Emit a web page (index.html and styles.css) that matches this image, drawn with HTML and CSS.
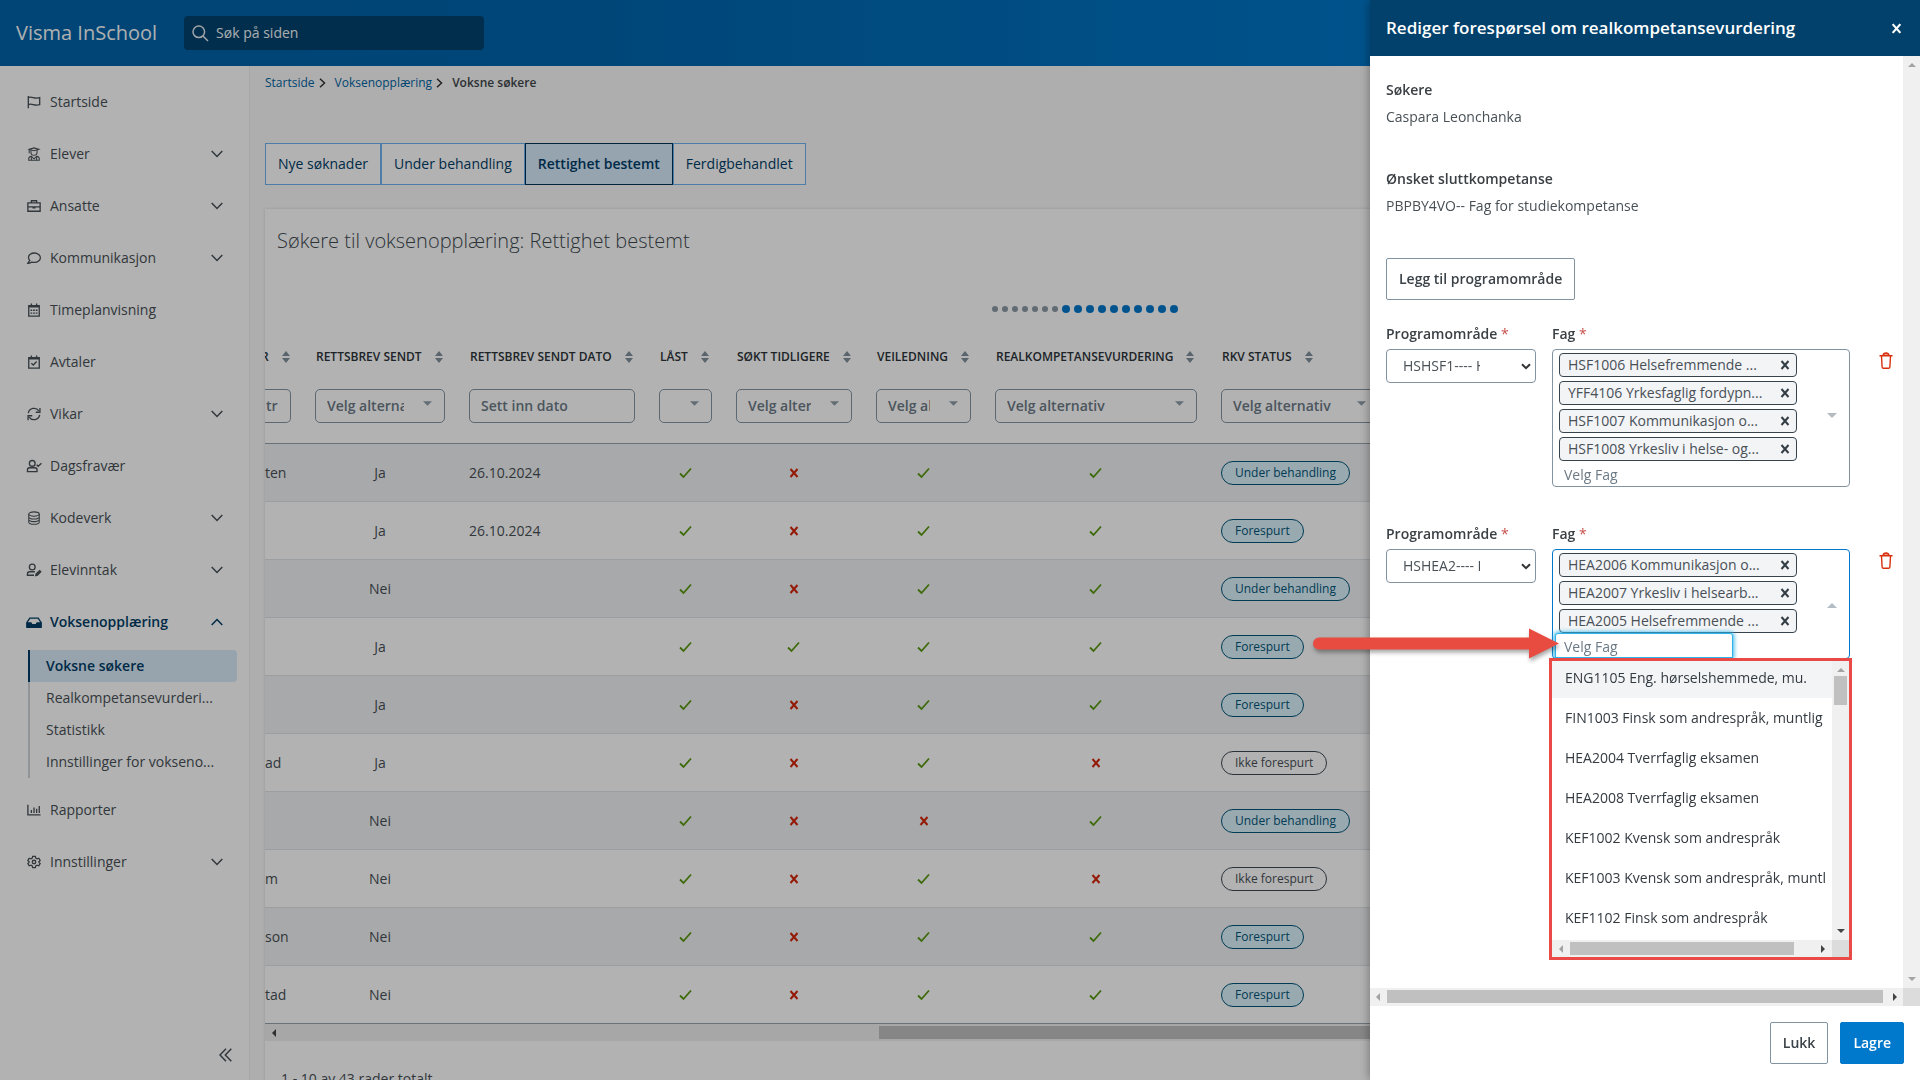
FILE: index.html
```html
<!DOCTYPE html>
<html lang="no">
<head>
<meta charset="utf-8">
<meta name="viewport" content="width=device-width, initial-scale=1">
<title>Visma InSchool – Voksne søkere</title>
<link rel="stylesheet" href="styles.css">
</head>
<body>
<svg class="sprite" aria-hidden="true">
  <symbol id="check" viewBox="0 0 14 12"><path d="M1 6.500 4.500 10 12 1.500" fill="none" stroke="currentColor" stroke-width="1.800"/></symbol>
  <symbol id="cross" viewBox="0 0 10 10"><path d="M1.500 1 8.500 9M8.500 1 1.500 9" fill="none" stroke="currentColor" stroke-width="2"/></symbol>
  <symbol id="sort" viewBox="0 0 8 12"><path d="M4 0 8 5H0zM4 12 0 7h8z" fill="currentColor"/></symbol>
  <symbol id="caret" viewBox="0 0 10 5"><path d="M0 0h10L5 5z" fill="currentColor"/></symbol>
  <symbol id="chevron" viewBox="0 0 12 8"><path d="M.7 1 6 6.5 11.3 1" fill="none" stroke="currentColor" stroke-width="1.5"/></symbol>
  <symbol id="trash" viewBox="0 0 14 17"><path d="M4 3.5C4.300 1.500 5 1 7 1s2.700.5 3 2.500z" fill="#ef9a86"/><path d="M.5 3.800h13M4 3.500C4.300 1.500 5 1 7 1s2.700.5 3 2.500M2.500 4l.6 11q.1 1.300 1.300 1.300h5.200q1.200 0 1.300-1.300l.6-11" fill="none" stroke="currentColor" stroke-width="1.400"/></symbol>
  <symbol id="arr" viewBox="0 0 8 4"><path d="M4 0 8 4H0z" fill="currentColor"/></symbol>
</svg>

<div class="app">
  <header class="topbar">
    <span class="brand">Visma InSchool</span>
    <label class="search">
      <svg width="17" height="17" viewBox="0 0 17 17" fill="none" stroke="currentColor" stroke-width="1.500"><circle cx="6.800" cy="6.800" r="5.800"/><path d="m11 11 5 5"/></svg>
      <input type="search" placeholder="Søk på siden" aria-label="Søk på siden">
    </label>
  </header>
  <div class="columns">
    <nav class="sidebar">
      <a class="item" href="#"><svg class="ico" viewBox="0 0 16 16"><path d="M1.500 1v14M1.500 3c4-2 7 2 13 0v8c-6 2-9-2-13 0"/></svg><span>Startside</span></a>
      <a class="item" href="#"><svg class="ico thin" viewBox="0 0 16 16"><path d="M2.500 2.500 8 1l5.500 1.500L8 4.200zM4.500 3.500V6a3.500 3.500 0 0 0 7 0V3.500M2.500 3v4M2 15.200v-2q0-2 3-2.500l3 2.800 3-2.800q3 .5 3 2.500v2zM5 12v3M11 12v3"/></svg><span>Elever</span><svg class="chev"><use href="#chevron"/></svg></a>
      <a class="item" href="#"><svg class="ico" viewBox="0 0 16 16"><path d="M1 4.500h14v9.500H1zM5 4.500V2h6v2.500M1 9h5.500M9.500 9H15M7 9h2v1H7z"/></svg><span>Ansatte</span><svg class="chev"><use href="#chevron"/></svg></a>
      <a class="item" href="#"><svg class="ico" viewBox="0 0 16 16"><path d="M8.500 2.300c-3.800 0-6.800 2.300-6.800 5.200 0 1.500.6 2.500 1.500 3.300L1 14c2 .2 3.500-.5 4.500-1.300 1 .3 2 .4 3 .4 3.800 0 6.800-2.500 6.800-5.400s-3-5.400-6.800-5.400z"/></svg><span>Kommunikasjon</span><svg class="chev"><use href="#chevron"/></svg></a>
      <a class="item" href="#"><svg class="ico" viewBox="0 0 16 16"><path d="M2 3h12v12H2zM2 4.500h12M5 .5v3M11 .5v3"/><path d="M4 8.300h8M4 11.500h8" stroke-dasharray="2 1"/></svg><span>Timeplanvisning</span></a>
      <a class="item" href="#"><svg class="ico" viewBox="0 0 16 16"><path d="M2 3h12v12H2zM2 4.500h12M5 .5v3M11 .5v3M5 9.500l2.200 2L11 7.500"/></svg><span>Avtaler</span></a>
      <a class="item" href="#"><svg class="ico" viewBox="0 0 16 16"><path d="M1.500 7a6.600 6.600 0 0 1 12-2.500M14.800 1v5H10M14.500 9a6.600 6.600 0 0 1-12 2.500M1.200 15v-5H6"/></svg><span>Vikar</span><svg class="chev"><use href="#chevron"/></svg></a>
      <a class="item" href="#"><svg class="ico" viewBox="0 0 16 16"><circle cx="6" cy="5" r="3.300"/><path d="M.5 14.500v-2Q.5 10 3 10h6q2.500 0 2.500 2.500v2zM11 6.500l1.800 1.800 3.700-3.500"/></svg><span>Dagsfravær</span></a>
      <a class="item" href="#"><svg class="ico thin" viewBox="0 0 16 16"><ellipse cx="8" cy="3.500" rx="6" ry="2.500"/><path d="M2 3.500v9C2 16 14 16 14 12.500v-9M2 6.500C2 10 14 10 14 6.500M2 9.500c0 3.500 12 3.500 12 0"/></svg><span>Kodeverk</span><svg class="chev"><use href="#chevron"/></svg></a>
      <a class="item" href="#"><svg class="ico" viewBox="0 0 16 16"><circle cx="6" cy="4.500" r="3.300"/><path d="M8 14H.5v-1.500Q.5 10 3 10h6"/><path d="M10 14.500l.5-2 4-3.800 1.200 1.300-3.700 4z" fill="currentColor"/></svg><span>Elevinntak</span><svg class="chev"><use href="#chevron"/></svg></a>
      <a class="item item-open" href="#"><svg class="ico" viewBox="0 0 16 16"><path d="M0 8.500 3.200 3.500h9.600L16 8.500v4.800q0 .7-.7.7H.7q-.7 0-.7-.7z"/><path d="M0 9h4.500l1 2h5l1-2H16v5H0z" fill="currentColor"/></svg><span>Voksenopplæring</span><svg class="chev up"><use href="#chevron"/></svg></a>
      <div class="submenu">
        <a class="current" href="#">Voksne søkere</a>
        <a href="#">Realkompetansevurderi...</a>
        <a href="#">Statistikk</a>
        <a href="#">Innstillinger for vokseno...</a>
      </div>
      <a class="item" href="#"><svg class="ico" viewBox="0 0 16 16"><path d="M1 2v11.500H15.500M5 11.500V8M8 11.500V5M11 11.500V6.500M14 11.500V3.500"/></svg><span>Rapporter</span></a>
      <a class="item" href="#"><svg class="ico" viewBox="0 0 16 16"><circle cx="8" cy="8" r="2"/><path d="M6.500 1.500h3l.5 2 1.500.8 2-.6 1.500 2.600L13.500 8l1.500 1.700-1.500 2.600-2-.6-1.500.8-.5 2h-3l-.5-2-1.500-.8-2 .6L1 9.700 2.500 8 1 6.300l1.500-2.600 2 .6L6 3.500z"/></svg><span>Innstillinger</span><svg class="chev"><use href="#chevron"/></svg></a>
      <button class="collapse" type="button" aria-label="Skjul meny"><svg width="13" height="14" viewBox="0 0 13 14" fill="none" stroke="currentColor" stroke-width="1.500"><path d="M7 .8 1 7l6 6.200M12.300.8l-6 6.200 6 6.200"/></svg></button>
    </nav>
    <main class="main">
      <div class="crumbs">
        <a href="#">Startside</a><svg width="7" height="10" viewBox="0 0 7 10"><path d="M1 .8 5.500 5 1 9.200"/></svg>
        <a href="#">Voksenopplæring</a><svg width="7" height="10" viewBox="0 0 7 10"><path d="M1 .8 5.500 5 1 9.200"/></svg>
        <span>Voksne søkere</span>
      </div>
      <div class="tabs">
        <button type="button">Nye søknader</button><button type="button">Under behandling</button><button type="button" class="active">Rettighet bestemt</button><button type="button">Ferdigbehandlet</button>
      </div>
      <section class="card">
        <h1>Søkere til voksenopplæring: Rettighet bestemt</h1>
        <div class="dots"><i></i><i></i><i></i><i></i><i></i><i></i><i></i><b></b><b></b><b></b><b></b><b></b><b></b><b></b><b></b><b></b><b></b></div>
        <table>
          <colgroup><col class="c0"><col class="c1"><col class="c2"><col class="c3"><col class="c4"><col class="c5"><col class="c6"><col class="c7"><col></colgroup>
          <thead>
            <tr class="labels">
              <th class="cut">R<svg><use href="#sort"/></svg></th>
              <th>RETTSBREV SENDT<svg><use href="#sort"/></svg></th>
              <th>RETTSBREV SENDT DATO<svg><use href="#sort"/></svg></th>
              <th>LÅST<svg><use href="#sort"/></svg></th>
              <th>SØKT TIDLIGERE<svg><use href="#sort"/></svg></th>
              <th>VEILEDNING<svg><use href="#sort"/></svg></th>
              <th>REALKOMPETANSEVURDERING<svg><use href="#sort"/></svg></th>
              <th>RKV STATUS<svg><use href="#sort"/></svg></th>
              <th></th>
            </tr>
            <tr class="filters">
              <td class="cut"><div class="filter"><input placeholder="tr" aria-label="Filter"></div></td>
              <td><div class="filter"><input placeholder="Velg alternativ" aria-label="Rettsbrev sendt"><svg><use href="#caret"/></svg></div></td>
              <td><div class="filter date"><input placeholder="Sett inn dato" aria-label="Rettsbrev sendt dato"></div></td>
              <td><div class="filter"><input aria-label="Låst"><svg><use href="#caret"/></svg></div></td>
              <td><div class="filter"><input placeholder="Velg alternativ" aria-label="Søkt tidligere"><svg><use href="#caret"/></svg></div></td>
              <td><div class="filter"><input placeholder="Velg alternativ" aria-label="Veiledning"><svg><use href="#caret"/></svg></div></td>
              <td><div class="filter"><input placeholder="Velg alternativ" aria-label="Realkompetansevurdering"><svg><use href="#caret"/></svg></div></td>
              <td><div class="filter"><input placeholder="Velg alternativ" aria-label="RKV status"><svg><use href="#caret"/></svg></div></td>
              <td></td>
            </tr>
          </thead>
          <tbody>
            <tr><td>ten</td><td>Ja</td><td>26.10.2024</td><td><svg class="ok"><use href="#check"/></svg></td><td><svg class="no"><use href="#cross"/></svg></td><td><svg class="ok"><use href="#check"/></svg></td><td><svg class="ok"><use href="#check"/></svg></td><td><span class="pill blue">Under behandling</span></td><td></td></tr>
            <tr><td></td><td>Ja</td><td>26.10.2024</td><td><svg class="ok"><use href="#check"/></svg></td><td><svg class="no"><use href="#cross"/></svg></td><td><svg class="ok"><use href="#check"/></svg></td><td><svg class="ok"><use href="#check"/></svg></td><td><span class="pill blue">Forespurt</span></td><td></td></tr>
            <tr><td></td><td>Nei</td><td></td><td><svg class="ok"><use href="#check"/></svg></td><td><svg class="no"><use href="#cross"/></svg></td><td><svg class="ok"><use href="#check"/></svg></td><td><svg class="ok"><use href="#check"/></svg></td><td><span class="pill blue">Under behandling</span></td><td></td></tr>
            <tr><td></td><td>Ja</td><td></td><td><svg class="ok"><use href="#check"/></svg></td><td><svg class="ok"><use href="#check"/></svg></td><td><svg class="ok"><use href="#check"/></svg></td><td><svg class="ok"><use href="#check"/></svg></td><td><span class="pill blue">Forespurt</span></td><td></td></tr>
            <tr><td></td><td>Ja</td><td></td><td><svg class="ok"><use href="#check"/></svg></td><td><svg class="no"><use href="#cross"/></svg></td><td><svg class="ok"><use href="#check"/></svg></td><td><svg class="ok"><use href="#check"/></svg></td><td><span class="pill blue">Forespurt</span></td><td></td></tr>
            <tr><td>ad</td><td>Ja</td><td></td><td><svg class="ok"><use href="#check"/></svg></td><td><svg class="no"><use href="#cross"/></svg></td><td><svg class="ok"><use href="#check"/></svg></td><td><svg class="no"><use href="#cross"/></svg></td><td><span class="pill">Ikke forespurt</span></td><td></td></tr>
            <tr><td></td><td>Nei</td><td></td><td><svg class="ok"><use href="#check"/></svg></td><td><svg class="no"><use href="#cross"/></svg></td><td><svg class="no"><use href="#cross"/></svg></td><td><svg class="ok"><use href="#check"/></svg></td><td><span class="pill blue">Under behandling</span></td><td></td></tr>
            <tr><td>m</td><td>Nei</td><td></td><td><svg class="ok"><use href="#check"/></svg></td><td><svg class="no"><use href="#cross"/></svg></td><td><svg class="ok"><use href="#check"/></svg></td><td><svg class="no"><use href="#cross"/></svg></td><td><span class="pill">Ikke forespurt</span></td><td></td></tr>
            <tr><td>son</td><td>Nei</td><td></td><td><svg class="ok"><use href="#check"/></svg></td><td><svg class="no"><use href="#cross"/></svg></td><td><svg class="ok"><use href="#check"/></svg></td><td><svg class="ok"><use href="#check"/></svg></td><td><span class="pill blue">Forespurt</span></td><td></td></tr>
            <tr><td>tad</td><td>Nei</td><td></td><td><svg class="ok"><use href="#check"/></svg></td><td><svg class="no"><use href="#cross"/></svg></td><td><svg class="ok"><use href="#check"/></svg></td><td><svg class="ok"><use href="#check"/></svg></td><td><span class="pill blue">Forespurt</span></td><td></td></tr>
          </tbody>
        </table>
        <div class="hbar table-bar"><svg class="arr left on"><use href="#arr"/></svg><span class="thumb"></span></div>
        <p class="count">1 - 10 av 43 rader totalt</p>
      </section>
    </main>
  </div>
</div>

<div class="backdrop"></div>

<aside class="drawer" role="dialog" aria-labelledby="drawer-title">
  <header class="drawer-head">
    <h2 id="drawer-title">Rediger forespørsel om realkompetansevurdering</h2>
    <button type="button" aria-label="Lukk dialog"><svg width="11" height="11" viewBox="0 0 10 10"><use href="#cross" width="10" height="10"/></svg></button>
  </header>
  <div class="drawer-body">
    <div class="content">
      <dl>
        <dt>Søkere</dt><dd>Caspara Leonchanka</dd>
        <dt>Ønsket sluttkompetanse</dt><dd>PBPBY4VO-- Fag for studiekompetanse</dd>
      </dl>
      <button type="button" class="btn">Legg til programområde</button>
      <div class="group">
        <div class="field">
          <label for="area1">Programområde <em>*</em></label>
          <div class="select"><select id="area1"><option>HSHSF1---- Helseservicefag</option></select><svg width="10" height="7" viewBox="0 0 10 7"><path d="M1 1.200 5 5.200 9 1.200"/></svg></div>
        </div>
        <div class="field">
          <label for="fag1">Fag <em>*</em></label>
          <div class="multi">
            <div class="picked">
              <span class="tag">HSF1006 Helsefremmende ...<button type="button" aria-label="Fjern"><svg><use href="#cross"/></svg></button></span>
              <span class="tag">YFF4106 Yrkesfaglig fordypn...<button type="button" aria-label="Fjern"><svg><use href="#cross"/></svg></button></span>
              <span class="tag">HSF1007 Kommunikasjon o...<button type="button" aria-label="Fjern"><svg><use href="#cross"/></svg></button></span>
              <span class="tag">HSF1008 Yrkesliv i helse- og...<button type="button" aria-label="Fjern"><svg><use href="#cross"/></svg></button></span>
              <input id="fag1" placeholder="Velg Fag">
            </div>
            <svg class="toggle"><use href="#caret"/></svg>
          </div>
        </div>
        <button type="button" class="remove" aria-label="Slett"><svg width="14" height="17"><use href="#trash"/></svg></button>
      </div>
      <div class="group">
        <div class="field">
          <label for="area2">Programområde <em>*</em></label>
          <div class="select"><select id="area2"><option>HSHEA2---- Helsearbeiderfag</option></select><svg width="10" height="7" viewBox="0 0 10 7"><path d="M1 1.200 5 5.200 9 1.200"/></svg></div>
        </div>
        <div class="field">
          <label for="fag2">Fag <em>*</em></label>
          <div class="multi open">
            <div class="picked">
              <span class="tag">HEA2006 Kommunikasjon o...<button type="button" aria-label="Fjern"><svg><use href="#cross"/></svg></button></span>
              <span class="tag">HEA2007 Yrkesliv i helsearb...<button type="button" aria-label="Fjern"><svg><use href="#cross"/></svg></button></span>
              <span class="tag">HEA2005 Helsefremmende ...<button type="button" aria-label="Fjern"><svg><use href="#cross"/></svg></button></span>
              <input id="fag2" placeholder="Velg Fag">
            </div>
            <svg class="toggle up"><use href="#caret"/></svg>
            <div class="dropdown">
              <div class="list">
                <ul role="listbox" aria-label="Fag">
                  <li role="option" class="hover">ENG1105 Eng. hørselshemmede, mu.</li>
                  <li role="option">FIN1003 Finsk som andrespråk, muntlig</li>
                  <li role="option">HEA2004 Tverrfaglig eksamen</li>
                  <li role="option">HEA2008 Tverrfaglig eksamen</li>
                  <li role="option">KEF1002 Kvensk som andrespråk</li>
                  <li role="option">KEF1003 Kvensk som andrespråk, muntl</li>
                  <li role="option">KEF1102 Finsk som andrespråk</li>
                </ul>
              </div>
              <div class="vbar"><svg class="arr"><use href="#arr"/></svg><span class="thumb"></span><svg class="arr down on"><use href="#arr"/></svg></div>
              <div class="hbar"><svg class="arr left"><use href="#arr"/></svg><span class="thumb"></span><svg class="arr right on"><use href="#arr"/></svg></div>
              <div class="corner"></div>
            </div>
            <svg class="pointer" width="248" height="34" viewBox="0 0 248 34"><path d="M6 10.500H216V1.500L246 16.500 216 31.500V22.500H6A6 6 0 0 1 6 10.500Z" fill="#e84c41"/></svg>
          </div>
        </div>
        <button type="button" class="remove" aria-label="Slett"><svg width="14" height="17"><use href="#trash"/></svg></button>
      </div>
    </div>
    <div class="vbar"><svg class="arr"><use href="#arr"/></svg><svg class="arr down"><use href="#arr"/></svg></div>
    <div class="hbar"><svg class="arr left"><use href="#arr"/></svg><span class="thumb"></span><svg class="arr right on"><use href="#arr"/></svg></div>
    <div class="corner"></div>
  </div>
  <footer class="drawer-foot">
    <button type="button" class="btn">Lukk</button>
    <button type="button" class="btn primary">Lagre</button>
  </footer>
</aside>
</body>
</html>
```

FILE: styles.css
```css
*, *::before, *::after { box-sizing: border-box; }
body, h1, h2, p, ul, dl, dd { margin: 0; padding: 0; }
body {
  font: 14px/20px "Open Sans", sans-serif;
  color: #485056;
  background: #fafafa;
  overflow: hidden;
}
button, input, select { font: inherit; color: inherit; }
button { background: none; border: 0; padding: 0; cursor: pointer; }
a { color: inherit; text-decoration: none; }
.sprite { position: absolute; width: 0; height: 0; }

.app { display: flex; flex-direction: column; height: 100vh; }

/* Top bar */
.topbar {
  flex: none;
  display: flex;
  align-items: center;
  gap: 27px;
  height: 66px;
  padding: 0 16px;
  background: linear-gradient(to right, #0063a8 0, #0065ac 30%, #007ace 80%);
}
.brand { font-size: 20px; line-height: 24px; color: #fafcfd; }
.search {
  display: flex;
  align-items: center;
  gap: 7px;
  width: 300px;
  height: 34px;
  padding: 0 8px;
  border-radius: 4px;
  background: #00426e;
  color: #e6edf2;
}
.search input { flex: 1; min-width: 0; border: 0; background: none; outline: 0; padding: 0; }
.search input::placeholder { color: #f4f8fa; opacity: 1; }

/* Sidebar */
.columns { flex: 1; min-height: 0; display: flex; }
.sidebar {
  flex: none;
  display: flex;
  flex-direction: column;
  width: 250px;
  padding: 10px 12px 13px 27px;
  background: #fff;
  border-right: 1px solid #f0f0f0;
}
.item {
  display: flex;
  align-items: center;
  gap: 9px;
  height: 52px;
  padding-right: 14px;
}
.item span { flex: 1; }
.ico { width: 14px; height: 14px; fill: none; stroke: currentColor; stroke-width: 1.5; overflow: visible; }
.thin { stroke-width: 1.2; }
.chev { width: 12px; height: 8px; }
.up { transform: rotate(180deg); }
.item-open { color: #003d66; font-weight: 600; }
.submenu { margin: 2px 0 6px 1px; border-left: 2px solid #ced4d8; }
.submenu a { display: block; height: 32px; padding-left: 16px; line-height: 32px; white-space: nowrap; }
.submenu .current {
  margin-left: -2px;
  border-left: 2px solid #003d66;
  border-radius: 0 4px 4px 0;
  background: #d8eaf8;
  color: #003d66;
  font-weight: 600;
}
.collapse { align-self: flex-end; width: 24px; height: 24px; margin-top: auto; display: grid; place-items: center; }

/* Page content */
.main { flex: 1; min-width: 0; display: flex; flex-direction: column; padding: 9px 16px 0 15px; }
.crumbs { display: flex; align-items: center; font-size: 12px; line-height: 16px; }
.crumbs a { color: #0063a3; }
.crumbs svg { margin: 0 9px 0 4px; fill: none; stroke: #333; stroke-width: 1.5; }
.crumbs span { color: #40464b; font-weight: 600; }
.tabs { display: flex; margin-top: 52px; }
.tabs button { height: 42px; padding: 0 12px; border: 1px solid #70b4f4; background: #fff; color: #003d66; }
.tabs .active { border-color: #003357; background: #d6ebfb; font-weight: 600; }
.card { flex: none; margin-top: 24px; padding-top: 20px; background: #fff; box-shadow: 0 0 3px rgba(0, 0, 0, .15); }
.card h1 { padding-left: 12px; font-size: 20px; line-height: 24px; font-weight: 300; color: #404a50; }
.dots { display: flex; align-items: center; justify-content: center; gap: 4px; padding: 52px 0 28px; }
.dots i { width: 6px; height: 6px; border-radius: 50%; background: #8c9aa6; }
.dots b { width: 8px; height: 8px; border-radius: 50%; background: #0079cc; }

table { width: 100%; table-layout: fixed; border-collapse: separate; border-spacing: 0; }
.c0 { width: 38px; } .c1 { width: 154px; } .c2 { width: 190px; } .c3 { width: 77px; }
.c4 { width: 140px; } .c5 { width: 119px; } .c6 { width: 226px; } .c7 { width: 182px; }
.labels th {
  height: 32px;
  padding: 0 0 0 13px;
  font-size: 12px;
  line-height: 16px;
  font-weight: 600;
  color: #2c3338;
  text-align: left;
  white-space: nowrap;
  overflow: hidden;
}
.labels svg { width: 8px; height: 12px; margin-left: 13px; color: #82909c; vertical-align: -2px; }
.labels .cut { padding: 0; text-indent: -4px; }
.filters td { padding: 16px 12px 20px; border-bottom: 1px solid #99a4ad; }
.filter {
  display: flex;
  height: 34px;
  padding-left: 11px;
  border: 1px solid #8496a4;
  border-radius: 5px;
  background: #fff;
}
.filter input { flex: 1; width: 0; min-width: 0; padding: 0; border: 0; background: none; outline: 0; font-weight: 600; }
.filter input::placeholder, .multi input::placeholder { color: #6c7a86; opacity: 1; }
.filter svg { flex: none; width: 9px; height: 5px; margin: 11px 12px 0 19px; color: #8f9ca7; }
.filters .cut { padding-left: 0; }
.filters .cut .filter { border-left: 0; border-radius: 0 5px 5px 0; padding: 0 12px 0 1px; }
tbody td { height: 58px; padding: 0; border-bottom: 1px solid #dde2e6; text-align: center; line-height: 20px; }
tbody tr:nth-child(odd) td { background: #f1f2f4; }
tbody tr:last-child td { border-bottom-color: #99a4ad; }
tbody td:nth-child(1) { text-align: left; white-space: nowrap; }
tbody td:nth-child(3), tbody td:nth-child(8) { text-align: left; padding-left: 12px; }
.ok { width: 14px; height: 12px; color: #58990f; vertical-align: -1px; }
.no { width: 10px; height: 10px; color: #d4260a; vertical-align: 0; }
.pill {
  display: inline-block;
  height: 24px;
  padding: 0 13px;
  border: 1px solid #3d4a54;
  border-radius: 12px;
  font-size: 12px;
  line-height: 22px;
  vertical-align: middle;
}
.blue { border-color: #00557a; background: #dcf3fc; color: #00557a; }
.count { padding: 28px 0 0 16px; }

/* Drawn scroll bars */
.vbar { display: flex; flex-direction: column; align-items: center; width: 17px; padding: 7px 0; background: #f0f0f0; }
.hbar { display: flex; align-items: center; height: 17px; padding: 0 5px; background: #f0f0f0; }
.corner { background: #dcdcdc; }
.thumb { background: #c0c0c0; }
.arr { flex: none; width: 8px; height: 4px; color: #a3a3a3; }
.arr.on { color: #444; }
.arr.left { transform: rotate(-90deg); }
.arr.right { transform: rotate(90deg); margin-left: auto; }
.arr.down { transform: rotate(180deg); margin-top: auto; }
.table-bar .thumb { flex: 1; height: 13px; margin-left: 601px; }

/* Drawer */
.backdrop { position: fixed; inset: 0; background: rgba(0, 0, 0, .3); }
.drawer {
  position: fixed;
  inset: 0 0 0 auto;
  display: flex;
  flex-direction: column;
  width: 550px;
  background: #fff;
  box-shadow: 0 0 10px rgba(0, 0, 0, .4);
}
.drawer-head {
  flex: none;
  display: flex;
  align-items: center;
  justify-content: space-between;
  height: 56px;
  padding: 0 16px;
  background: #01416b;
  color: #fff;
}
.drawer-head h2 { font-size: 17px; line-height: 24px; font-weight: 600; }
.drawer-head button { width: 16px; height: 24px; display: grid; place-items: center; }
.drawer-body { flex: 1; min-height: 0; display: grid; grid-template: minmax(0, 1fr) 18px / minmax(0, 1fr) 17px; }
.drawer-body > .hbar { height: 18px; padding: 0 4px 1px; }
.drawer-body > .hbar .thumb { flex: 1; height: 13px; margin: 0 8px 0 5px; }
.content { padding: 24px 16px; }
dt, .field label { color: #3b4045; font-weight: 600; }
dd { margin: 7px 0 42px; }
.btn {
  height: 42px;
  padding: 0 12px;
  border: 1px solid #8293a1;
  border-radius: 2px;
  background: #fff;
  color: #3b4248;
  font-weight: 600;
}
.primary { border-color: #0079cc; background: #0079cc; color: #fff; }
.group { display: grid; grid-template-columns: 150px 298px 40px; column-gap: 16px; align-items: start; margin-top: 24px; }
.group + .group { margin-top: 37px; }
.field label { display: block; margin-bottom: 5px; }
.field em { color: #c9514c; font-style: normal; font-weight: 400; }
.select { display: grid; grid-template-columns: 1fr 20px; align-items: center; height: 34px; border: 1px solid #8293a1; border-radius: 4px; }
.select select {
  grid-area: 1 / 1 / 2 / 3;
  width: 100%;
  height: 32px;
  padding: 0 55px 0 16px;
  border: 0;
  background: none;
  appearance: none;
  outline: 0;
}
.select svg { grid-area: 1 / 2; margin-left: 6px; fill: none; stroke: #333; stroke-width: 2; pointer-events: none; }
.multi {
  position: relative;
  display: flex;
  align-items: center;
  justify-content: space-between;
  padding: 3px 12px 0 2px;
  border: 1px solid #8293a1;
  border-radius: 4px;
}
.picked { display: flex; flex-direction: column; align-items: flex-start; gap: 4px; }
.tag {
  display: flex;
  align-items: center;
  justify-content: space-between;
  width: 238px;
  height: 24px;
  margin-left: 4px;
  padding: 0 6px 0 8px;
  border: 1px solid #37444e;
  border-radius: 4px;
  background: #f3f4f6;
  white-space: nowrap;
}
.tag button { display: flex; }
.tag svg { width: 10px; height: 10px; color: #333d45; }
.picked input { width: 178px; height: 25px; margin-top: -4px; padding: 1px 9px 0; border: 0; outline: 0; background: none; }
.toggle { width: 10px; height: 5px; margin-bottom: 8px; color: #b4bcc3; }
.toggle.up { margin-bottom: 0; }
.open { border-color: #0079cc; }
.open input { border-radius: 3px 3px 0 0; box-shadow: inset 0 0 0 1px #2eb4e8, 0 0 4px 1px #2eb4e8; }
.remove { display: grid; place-items: center; width: 40px; height: 17px; margin-top: 28px; color: #d8300f; }
.dropdown {
  position: absolute;
  top: 100%;
  left: -4px;
  right: -3px;
  display: grid;
  grid-template: 279px 17px / minmax(0, 1fr) 17px;
  border: 3px solid #ea4a45;
  background: #fff;
}
.list { overflow: hidden; }
.list ul { margin-top: -3px; list-style: none; }
.list li { height: 40px; padding-left: 13px; line-height: 40px; white-space: nowrap; color: #333a40; }
.list .hover { background: #f3f4f6; }
.dropdown .vbar .thumb { width: 13px; height: 29px; margin-top: 4px; }
.dropdown .hbar .thumb { width: 224px; height: 13px; margin-left: 5px; }
.pointer { position: absolute; right: 288px; bottom: -3px; filter: drop-shadow(1px 3px 2px rgba(0, 0, 0, .35)); overflow: visible; }
.drawer-foot { flex: none; display: flex; justify-content: flex-end; gap: 12px; padding: 16px; }
```
